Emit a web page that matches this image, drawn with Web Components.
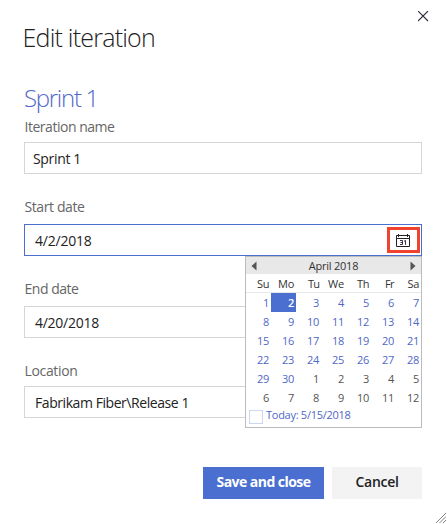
<!DOCTYPE html>
<html lang="en">
<head>
<meta charset="utf-8">
<title>Edit iteration</title>
<style>
html,body{margin:0;height:100%;background:#fff;overflow:hidden}
body{font-family:"Open Sans","Noto Sans",sans-serif;color:#222}
</style>
</head>
<body>
<iteration-dialog></iteration-dialog>
<script>
const define = (name, html, setup) => customElements.define(name, class extends HTMLElement {
  connectedCallback() {
    if (this.shadowRoot) return;
    this.attachShadow({mode: 'open'}).innerHTML = typeof html === 'function' ? html(this) : html;
    if (setup) setup(this);
  }
});

/* A single line of text, tracked so that its advance equals the w attribute. */
define('fit-text', '<style>:host{display:inline-block;white-space:nowrap}</style><span><slot></slot></span>', el => {
  const w = parseFloat(el.getAttribute('w'));
  if (!w) return;
  const n = el.textContent.length;
  const natural = el.shadowRoot.querySelector('span').getBoundingClientRect().width;
  el.style.letterSpacing = ((w - natural) / n).toFixed(3) + 'px';
});

define('close-icon', `<style>:host{display:block;width:11px;height:11px}svg{display:block}</style>
<svg width="11" height="11" viewBox="0 0 11 11"><path d="M0 0 10 10M10 0 0 10" stroke="#2b2b3a" stroke-width="1.1" fill="none"/></svg>`);

define('calendar-button', `<style>:host{display:flex;box-sizing:border-box;width:33px;height:26px;border:3px solid #f0432f;padding:4px 0 0 6px}svg{display:block}</style>
<svg width="14" height="14" viewBox="0 0 14 14"><path d="M.5 1.5h13v11H.5zM1 4.5h12" stroke="#222" fill="none"/><path d="M2.5 0v3M11.5 0v3" stroke="#222"/><path d="M4 6.5h2.5v4H4M4.5 8.5h2M8 7.2l1.5-.7v4.4" stroke="#3a2c45" fill="none"/></svg>`);

define('form-field', el => `<style>
:host{display:block}
.label{font-size:14px;line-height:20px;height:20px;color:#666;padding-left:.5px}
.box{box-sizing:border-box;height:32px;border:1px solid ${el.hasAttribute('active') ? '#4a6fd0' : '#d6d6d6'};background:#fff;
display:flex;justify-content:space-between;font-size:14px;line-height:30px;color:#222;padding:${el.hasAttribute('active') ? '2px' : '0'} 1px 0 ${el.getAttribute('inset')}px;margin-top:${el.getAttribute('gap')}px}
.value{line-height:32px;height:30px;margin-top:${el.getAttribute('shift') || 0}px}
</style><div class="label"><fit-text w="${el.getAttribute('lw')}">${el.getAttribute('label')}</fit-text></div>
<div class="box"><div class="value"><fit-text w="${el.getAttribute('vw')}">${el.getAttribute('value')}</fit-text></div><slot></slot></div>`);

define('calendar-popup', () => {
  const names = ['Su','Mo','Tu','We','Th','Fr','Sa'];
  const widths = [12,16,11,16,12,9,11.5];
  let cells = names.map((n, i) => `<div class="name"><fit-text w="${widths[i]}">${n}</fit-text></div>`).join('');
  for (let i = 1; i <= 42; i++) {
    const d = i > 30 ? i - 30 : i;
    cells += `<div class="day${i > 30 ? ' next' : ''}${i === 2 ? ' on' : ''}"><fit-text w="${d > 9 ? 12 : 6}">${d}</fit-text></div>`;
  }
  return `<style>
:host{display:block;box-sizing:border-box;width:177px;height:172px;border:1px solid #bcbcbc;background:#fff;font-size:11px;color:#333}
.head{height:17px;background:#e8e8e8;display:flex;justify-content:space-between;align-items:center;padding:0 5px;line-height:17px;box-sizing:border-box}
.head svg{display:block}
.grid{display:grid;grid-template-columns:repeat(7,25px);grid-template-rows:19px repeat(6,19px)}
.grid div{text-align:right;padding-right:2px;line-height:19px;box-sizing:border-box}
.name{box-shadow:inset 0 -1px #e8e8e8;line-height:20px!important}
.day{color:#4f68c8}.next{color:#555}.on{background:#4a6fd0;color:#fff;font-weight:600}
.today{display:flex;color:#4f68c8;gap:3px;padding:3px 0 0 3px;line-height:13px}
.today fit-text{margin-top:-2px}
i{box-sizing:border-box;width:14px;height:14px;border:1px solid #cbd7ee}
</style>
<div class="head"><svg width="6" height="10"><path d="M5.5.5v9L.5 5z" fill="#555"/></svg><fit-text w="49.5">April 2018</fit-text><svg width="6" height="10"><path d="M.5.5v9l5-4.5z" fill="#555"/></svg></div>
<div class="grid">${cells}</div>
<div class="today"><i></i><fit-text w="84.5">Today: 5/15/2018</fit-text></div>`;
});

define('action-button', el => `<style>
:host{display:flex;justify-content:center;height:32px;line-height:30px;font-size:14px;font-weight:600;
width:${el.getAttribute('width')}px;background:${el.hasAttribute('primary') ? '#4a6fd0' : '#f3f3f3'};color:${el.hasAttribute('primary') ? '#fff' : '#222'}}
fit-text{font-weight:${el.hasAttribute('primary') ? 700 : 600}}
</style><fit-text w="${el.getAttribute('tw')}"><slot></slot></fit-text>`, el => {
  const t = el.shadowRoot.querySelector('fit-text');
  const w = parseFloat(el.getAttribute('tw'));
  t.style.letterSpacing = '0px';
  const natural = t.getBoundingClientRect().width;
  t.style.letterSpacing = ((w - natural) / el.textContent.length).toFixed(3) + 'px';
});

define('iteration-dialog', `<style>
:host{display:block;box-sizing:border-box;width:447px;height:524px;padding:11px 25px 0 24px;background:#fff;position:relative}
.top{display:flex;justify-content:flex-end;height:10px;margin-right:-7px}
h1,h2{margin:0;font-weight:300;line-height:32px;height:32px}
h1{font-size:25px;color:#222;margin-left:-1.5px}
h2{font-size:24px;color:#5068cc;margin-top:28.5px}
.fields{display:flex;flex-direction:column}
.actions{display:flex;gap:8px;justify-content:flex-end;margin-top:49px}
calendar-popup{position:absolute;left:245px;top:256px}
.grip{position:absolute;right:1px;bottom:1px;display:block}
</style>
<div class="top"><close-icon></close-icon></div>
<h1><fit-text w="132.5">Edit iteration</fit-text></h1>
<h2><fit-text w="74">Sprint 1</fit-text></h2>
<div class="fields">
<form-field style="margin-top:3.5px" label="Iteration name" lw="90" value="Sprint 1" vw="48" inset="8" gap="5" shift="0"></form-field>
<form-field style="margin-top:23px" label="Start date" lw="60" value="4/2/2018" vw="56.5" inset="10" gap="7" shift="-2" active><calendar-button></calendar-button></form-field>
<form-field style="margin-top:23px" label="End date" lw="54" value="4/20/2018" vw="64" inset="10" gap="7" shift="0"></form-field>
<form-field style="margin-top:23px" label="Location" lw="53" value="Fabrikam Fiber\\Release 1" vw="154" inset="10" gap="5" shift="0"></form-field>
</div>
<div class="actions"><action-button primary width="121" tw="94">Save and close</action-button><action-button width="90" tw="43">Cancel</action-button></div>
<calendar-popup></calendar-popup>
<svg class="grip" width="10" height="10"><path d="M0 10 10 0M3.5 10 10 3.5M7 10l3-3" stroke="#858585" fill="none"/></svg>`);
</script>
</body>
</html>
